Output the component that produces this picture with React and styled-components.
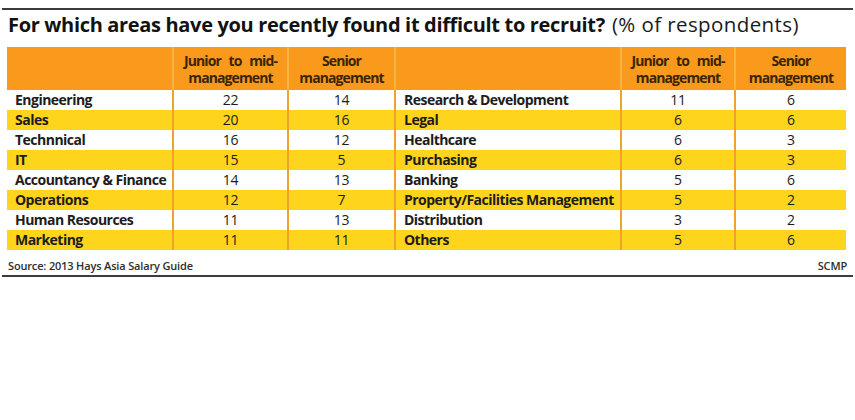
import React from "react";
import styled, { createGlobalStyle } from "styled-components";

const Global = createGlobalStyle`
  body {
    margin: 0;
    background: #fff;
    font-family: "Open Sans", "Noto Sans", sans-serif;
    color: #1c1c1c;
  }
`;

const ORANGE = "#F99A1C";
const YELLOW = "#FFD41C";
const LINE = "#F2A22C";

const Page = styled.div`
  width: 855px;
  padding-top: 8px;
`;

const Rule = styled.div`
  margin: 0 2px;
  height: 2px;
  background: #3c3c3c;
`;

const Title = styled.h1`
  margin: 3px 0 10px 8px;
  height: 24px;
  font-size: 20px;
  line-height: 24px;
  font-weight: 700;
  letter-spacing: -0.33px;
  color: #121212;
  white-space: nowrap;
`;

const Sub = styled.span`
  margin-left: 7px;
  font-size: 20.5px;
  line-height: 20px;
  font-weight: 400;
  letter-spacing: 0.4px;
  color: #1a1a1a;
`;

const Table = styled.div`
  display: grid;
  grid-template-columns: 165px 115px 107px 226px 114px 112px;
  margin-left: 7px;
  width: 839px;
`;

const HeadCell = styled.div`
  background: ${ORANGE};
  height: 43px;
  display: flex;
  align-items: center;
  justify-content: center;
  text-align: center;
  font-size: 14px;
  line-height: 17px;
  font-weight: 700;
  letter-spacing: -0.9px;
  word-spacing: 5px;
  color: #3a2504;
  border-left: ${(p) => (p.$first ? "none" : "2px solid #F8B440")};
`;

const Cell = styled.div`
  height: 20px;
  line-height: 20px;
  font-size: 14px;
  white-space: nowrap;
  background: ${(p) => (p.$alt ? YELLOW : "#fff")};
  border-left: ${(p) => (p.$first ? "none" : `2px solid ${LINE}`)};
  font-weight: ${(p) => (p.$label ? 700 : 500)};
  letter-spacing: ${(p) => (p.$label ? "-0.52px" : "-0.2px")};
  text-align: ${(p) => (p.$label ? "left" : "center")};
  padding-left: ${(p) => (p.$label ? "8px" : "0")};
  color: #1c1c1c;
`;

const Footer = styled.div`
  display: flex;
  justify-content: space-between;
  margin: 0 8px 0 8px;
  height: 25px;
  padding-top: 9px;
  box-sizing: border-box;
  font-size: 11px;
  line-height: 14px;
  font-weight: 600;
  letter-spacing: -0.16px;
  color: #2e2e2e;
`;

const rows = [
  ["Engineering", 22, 14, "Research & Development", 11, 6],
  ["Sales", 20, 16, "Legal", 6, 6],
  ["Technnical", 16, 12, "Healthcare", 6, 3],
  ["IT", 15, 5, "Purchasing", 6, 3],
  ["Accountancy & Finance", 14, 13, "Banking", 5, 6],
  ["Operations", 12, 7, "Property/Facilities Management", 5, 2],
  ["Human Resources", 11, 13, "Distribution", 3, 2],
  ["Marketing", 11, 11, "Others", 5, 6],
];

const Head = ({ first, lines }) => (
  <HeadCell $first={first}>
    <div>
      {lines.map((l, i) => (
        <div key={i}>{l}</div>
      ))}
    </div>
  </HeadCell>
);

export default function App() {
  return (
    <Page>
      <Global />
      <Rule />
      <Title>
        For which areas have you recently found it difficult to recruit?
        <Sub>(% of respondents)</Sub>
      </Title>
      <Table>
        <Head first lines={[]} />
        <Head lines={["Junior to mid-", "management"]} />
        <Head lines={["Senior", "management"]} />
        <Head lines={[]} />
        <Head lines={["Junior to mid-", "management"]} />
        <Head lines={["Senior", "management"]} />
        {rows.map((r, i) =>
          r.map((v, j) => (
            <Cell
              key={`${i}-${j}`}
              $alt={i % 2 === 1}
              $first={j === 0}
              $label={j === 0 || j === 3}
            >
              {v}
            </Cell>
          ))
        )}
      </Table>
      <Footer>
        <span>Source: 2013 Hays Asia Salary Guide</span>
        <span>SCMP</span>
      </Footer>
      <Rule />
    </Page>
  );
}
